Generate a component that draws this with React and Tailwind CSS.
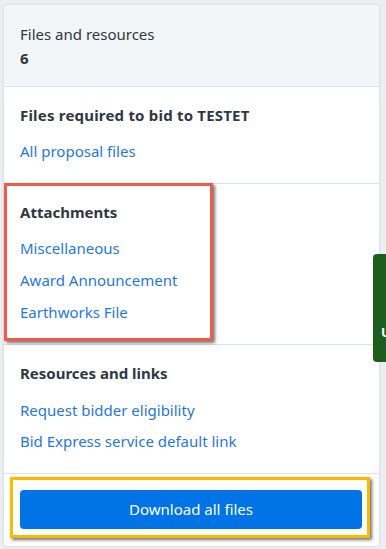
import React from "react";

const font = { fontFamily: '"Noto Sans", "Open Sans", sans-serif' };

function Link({ children }) {
  return (
    <a href="#" className="block text-[15px] leading-[20px] text-[#1f78e0] no-underline">
      {children}
    </a>
  );
}

export default function App() {
  return (
    <div className="w-[386px] h-[549px] bg-[#eceff1] relative overflow-hidden" style={font}>
      <div className="absolute left-[4px] top-[5px] w-[375px] h-[541px] bg-white rounded-[3px] shadow-[0_0_3px_rgba(0,0,0,0.15)] flex flex-col overflow-hidden">
        <div className="bg-[#f3f6f9] border-b border-[#d8e2e8] h-[82px] px-[16px] pt-[19px]">
          <div className="text-[15px] leading-[20px] text-[#2e3842]">Files and resources</div>
          <div className="text-[15px] leading-[20px] font-bold text-[#2e3842] mt-[4px]">6</div>
        </div>
        <div className="border-b border-[#d8e2e8] h-[97px] px-[16px] pt-[18px]">
          <div className="text-[15px] leading-[20px] font-bold text-[#2e3842] tracking-[0.2px]">Files required to bid to TESTET</div>
          <div className="mt-[16px]"><Link>All proposal files</Link></div>
        </div>
        <div className="border-b border-[#d8e2e8] h-[161px] px-[16px] pt-[18px] flex flex-col gap-[12px]">
          <div className="text-[15px] leading-[20px] font-bold text-[#2e3842] mb-[4px]">Attachments</div>
          <Link>Miscellaneous</Link>
          <Link>Award Announcement</Link>
          <Link>Earthworks File</Link>
        </div>
        <div className="border-b border-[#d8e2e8] h-[129px] px-[16px] pt-[18px] flex flex-col gap-[11px]">
          <div className="text-[15px] leading-[20px] font-bold text-[#2e3842] mb-[6px]">Resources and links</div>
          <Link>Request bidder eligibility</Link>
          <Link>Bid Express service default link</Link>
        </div>
        <div className="flex-1 px-[16px] pt-[16px]">
          <button className="w-[342px] h-[39px] rounded-[4px] bg-[#0073e6] text-white text-[15px]">
            Download all files
          </button>
        </div>
      </div>

      {/* red highlight */}
      <div className="absolute left-[4px] top-[183px] w-[209px] h-[158px] border-[3px] border-[#f05a4a] shadow-[2px_2px_3px_rgba(0,0,0,0.55)] pointer-events-none" />
      {/* yellow highlight */}
      <div className="absolute left-[10px] top-[477px] w-[360px] h-[61px] border-[3px] border-[#fbb900] shadow-[2px_2px_3px_rgba(0,0,0,0.55)] pointer-events-none" />
      {/* green side tab */}
      <div className="absolute left-[373px] top-[254px] w-[20px] h-[108px] bg-[#1d5e1e] rounded-l-[4px] overflow-hidden">
        <span className="absolute left-[8px] top-[72px] text-white text-[13px] font-bold leading-none">U</span>
      </div>
    </div>
  );
}
